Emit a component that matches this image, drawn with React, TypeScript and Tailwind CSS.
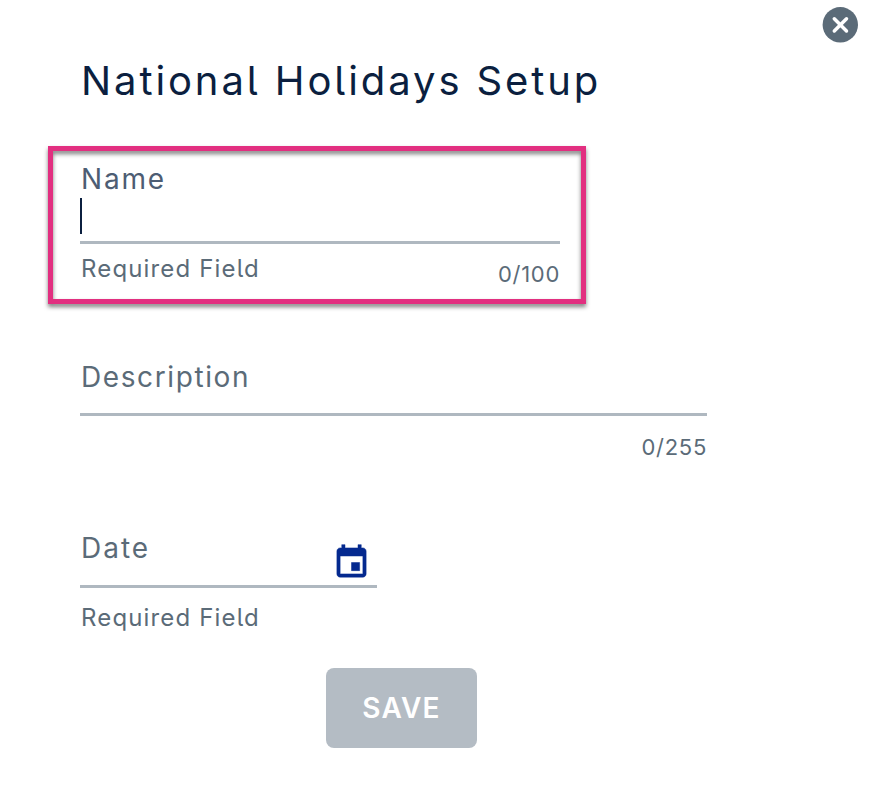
interface LabelProps {
  label: string,
  className?: string,
}

const CloseIcon = () => (
  <svg viewBox="0 0 36 36" className="size-9">
    <circle cx="18.3" cy="17.8" r="17.7" fill="#5b6b78" />
    <path d="M12.3 11.8l12.2 12.2M24.5 11.8l-12.2 12.2" stroke="#fff" strokeWidth="3.5" strokeLinecap="round" />
  </svg>
)

const CalendarIcon = () => (
  <svg viewBox="0 0 24 24" className="mt-[13px] mr-[6px] size-[39px]" fill="#04298f" stroke="#04298f" strokeWidth="0.3">
    <path d="M17 12h-5v5h5v-5zM16 1v2H8V1H6v2H5c-1.11 0-1.99.9-1.99 2L3 19c0 1.1.89 2 2 2h14c1.1 0 2-.9 2-2V5c0-1.1-.9-2-2-2h-1V1h-2zm3 18H5V8h14v11z" />
  </svg>
)

const Label = ({ label, className = "" }: LabelProps) => (
  <div className={`h-9 pl-px text-[28px] leading-9 whitespace-nowrap ${className}`}>{label}</div>
)

const Required = () => (
  <div className="h-8 pl-px text-[24px] leading-8 tracking-[1.15px] whitespace-nowrap">
    Required Field
  </div>
)

const Counter = ({ value }: { value: string }) => (
  <div className="h-7 text-right text-[22px] leading-7 tracking-[0.7px] whitespace-nowrap">
    {value}
  </div>
)

const App = () => (
  <main className="relative h-[798px] w-[876px] overflow-hidden bg-white pt-[57px] pl-[80px] font-['Inter',sans-serif] text-[#5b6b78] [font-feature-settings:'cv05']">
    <button aria-label="Close" className="absolute top-[7px] left-[822px]">
      <CloseIcon />
    </button>

    <h1 className="h-12 pl-px text-[40px] leading-[48px] tracking-[2.9px] whitespace-nowrap text-[#0b1f3f]">
      National Holidays Setup
    </h1>

    <section className="relative mt-[56px] h-[130px] w-[480px]">
      <Label label="Name" className="tracking-[1.8px] text-[#4d5d73]" />
      <div className="flex h-[47px] items-start border-b-[3px] border-[#afb8c0] pt-px">
        <span className="h-9 w-[2px] bg-[#0b1f3f]" />
      </div>
      <div className="flex justify-between pt-[8px]">
        <div className="pt-px">
          <Required />
        </div>
        <div className="pt-[8px]">
          <Counter value="0/100" />
        </div>
      </div>
      <div className="pointer-events-none absolute -top-[15px] -left-[32px] h-[158px] w-[538px] border-[5px] border-[#e22f80] drop-shadow-[0_3px_2px_rgba(0,0,0,0.5)]" />
    </section>

    <section className="mt-[68px] w-[627px]">
      <Label label="Description" className="tracking-[1.6px]" />
      <div className="h-[21px] border-b-[3px] border-[#afb8c0]" />
      <div className="pt-[17px]">
        <Counter value="0/255" />
      </div>
    </section>

    <section className="mt-[69px] w-[297px]">
      <div className="flex h-[58px] justify-between border-b-[3px] border-[#afb8c0]">
        <Label label="Date" className="tracking-[2px]" />
        <CalendarIcon />
      </div>
      <div className="pt-[14px]">
        <Required />
      </div>
    </section>

    <button className="mt-[34px] ml-[246px] h-20 w-[151px] rounded-lg bg-[#b4bcc4] text-[28px] font-semibold tracking-[1.2px] text-white">
      SAVE
    </button>
  </main>
)

export default App
